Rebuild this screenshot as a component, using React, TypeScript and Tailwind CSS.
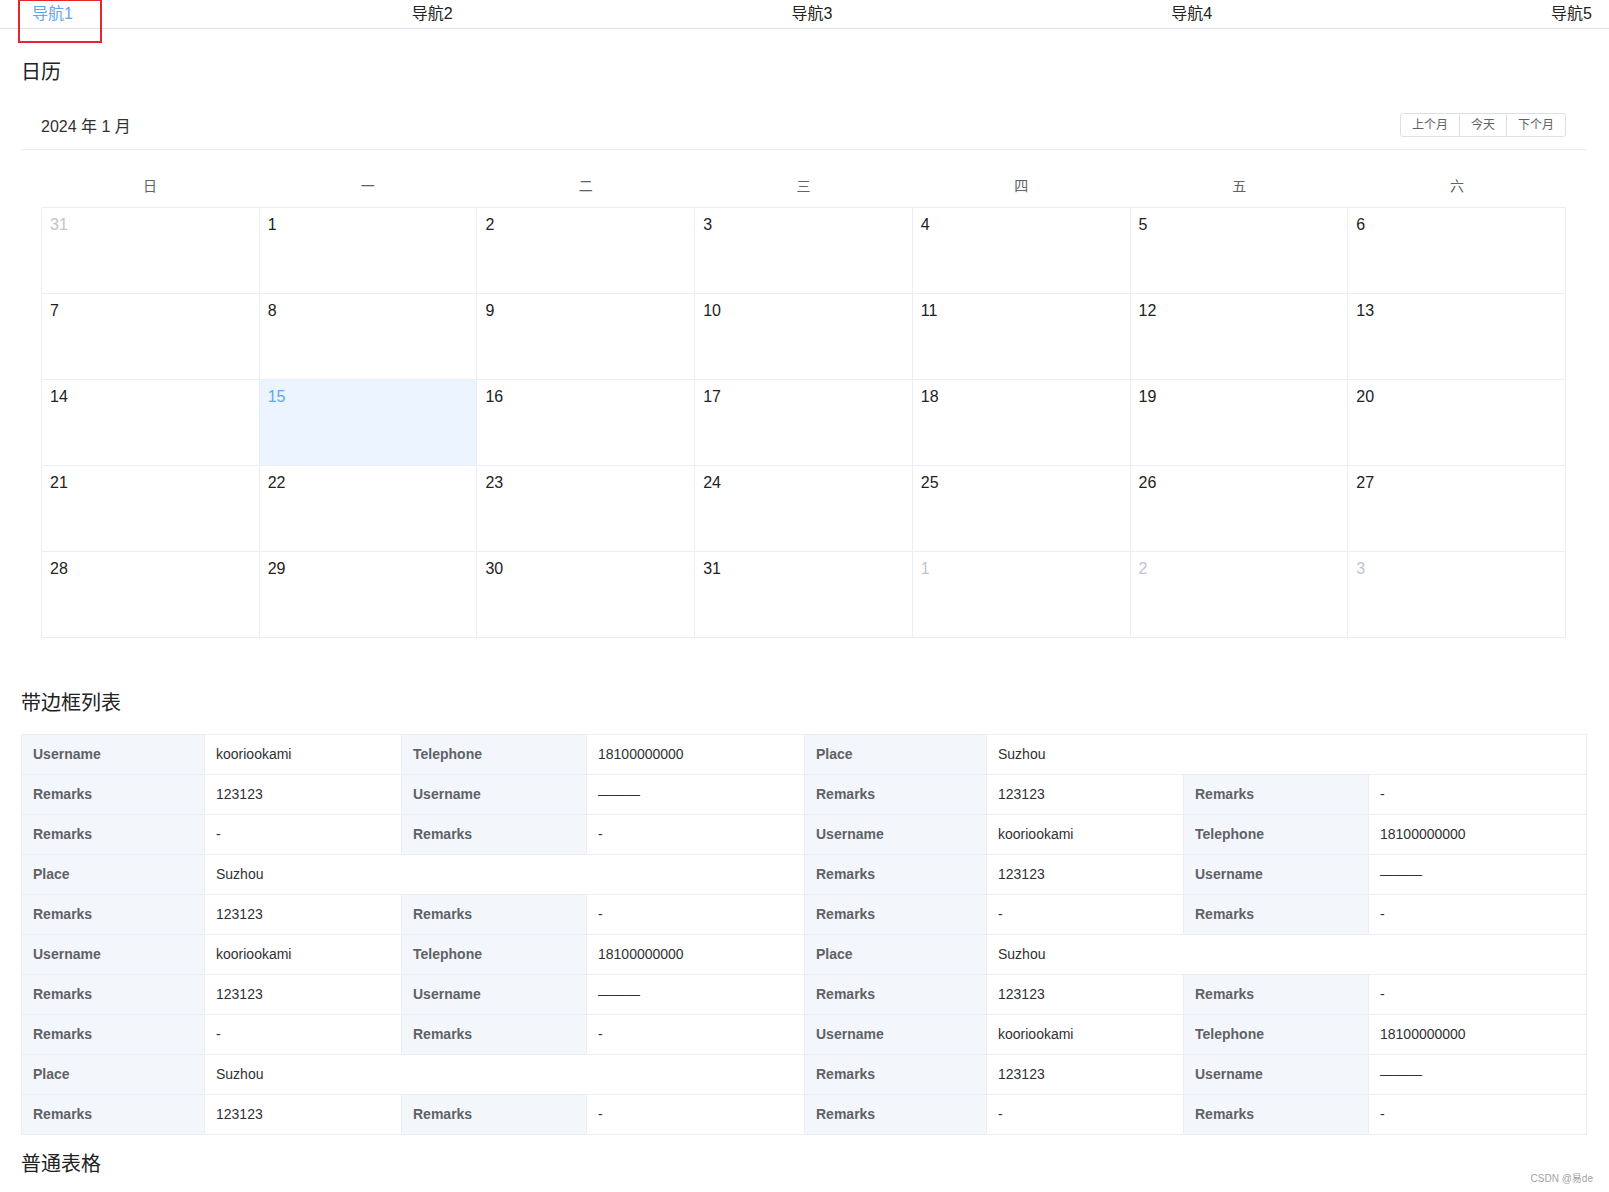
import React from 'react';

const font = { fontFamily: '"Liberation Sans", "Noto Sans CJK SC", sans-serif' };

const navItems = ['导航1', '导航2', '导航3', '导航4', '导航5'];
const weekDays = ['日', '一', '二', '三', '四', '五', '六'];

type Day = { n: number; type: 'prev' | 'cur' | 'next' };

const buildDays = (): Day[] => {
  const days: Day[] = [{ n: 31, type: 'prev' }];
  for (let i = 1; i <= 31; i++) days.push({ n: i, type: 'cur' });
  for (let i = 1; i <= 3; i++) days.push({ n: i, type: 'next' });
  return days;
};

type Cell = { label: string; value: string; span?: number };

const blockA: Cell[][] = [
  [
    { label: 'Username', value: 'kooriookami' },
    { label: 'Telephone', value: '18100000000' },
    { label: 'Place', value: 'Suzhou', span: 3 },
  ],
  [
    { label: 'Remarks', value: '123123' },
    { label: 'Username', value: '———' },
    { label: 'Remarks', value: '123123' },
    { label: 'Remarks', value: '-' },
  ],
  [
    { label: 'Remarks', value: '-' },
    { label: 'Remarks', value: '-' },
    { label: 'Username', value: 'kooriookami' },
    { label: 'Telephone', value: '18100000000' },
  ],
  [
    { label: 'Place', value: 'Suzhou', span: 3 },
    { label: 'Remarks', value: '123123' },
    { label: 'Username', value: '———' },
  ],
  [
    { label: 'Remarks', value: '123123' },
    { label: 'Remarks', value: '-' },
    { label: 'Remarks', value: '-' },
    { label: 'Remarks', value: '-' },
  ],
];

const rows = [...blockA, ...blockA];

const App: React.FC = () => {
  const days = buildDays();

  return (
    <div className="relative min-h-[1192px] bg-white text-[#303133]" style={font}>
      {/* Top nav */}
      <div className="flex h-[29px] items-center justify-between border-b border-[#dcdfe6] pl-[32px] pr-[17px] text-[16px] leading-[28px]">
        {navItems.map((item, i) => (
          <span key={item} className={i === 0 ? 'text-[#5fa6f5]' : 'text-[#222]'}>
            {item}
          </span>
        ))}
      </div>
      {/* annotation box around the active nav item */}
      <div className="pointer-events-none absolute left-[18px] top-[-1px] h-[44px] w-[84px] border-2 border-[#e5262a]" />

      <div className="pl-[21px] pr-[23px]">
        <h2 className="mt-[29px] text-[20px] leading-[28px] text-[#222]">日历</h2>

        {/* Calendar */}
        <div className="mt-[15px]">
          <div className="flex items-center justify-between border-b border-[#ebeef5] px-5 py-3">
            <div className="h-[24px] text-[16px] leading-[28px] text-[#303133]">2024 年 1 月</div>
            <div className="flex h-[24px] rounded-[3px] border border-[#dcdfe6] text-[12px] leading-[22px] text-[#606266]">
              <button className="px-[11px]">上个月</button>
              <button className="border-l border-[#dcdfe6] px-[11px]">今天</button>
              <button className="border-l border-[#dcdfe6] px-[11px]">下个月</button>
            </div>
          </div>
          <div className="px-5 pb-[35px] pt-3">
            <div className="grid grid-cols-7 pb-[10px] pt-[14px] text-center text-[14px] leading-[21px] text-[#606266]">
              {weekDays.map((d) => (
                <div key={d}>{d}</div>
              ))}
            </div>
            <div className="grid grid-cols-7 border-l border-t border-[#ebeef5]">
              {days.map((d, i) => {
                const today = d.type === 'cur' && d.n === 15;
                return (
                  <div
                    key={i}
                    className={`h-[86px] border-b border-r border-[#ebeef5] p-2 text-[16px] leading-[18px] ${
                      today ? 'bg-[#ecf5ff] text-[#5fa6f5]' : d.type === 'cur' ? 'text-[#222]' : 'text-[#c0c4cc]'
                    }`}
                  >
                    {d.n}
                  </div>
                );
              })}
            </div>
          </div>
        </div>

        <h2 className="mt-[16px] text-[20px] leading-[28px] text-[#222]">带边框列表</h2>

        {/* Bordered descriptions */}
        <table className="mt-[17px] w-full table-fixed border-collapse text-[14px] leading-[23px]">
          <colgroup>
            <col className="w-[183px]" />
            <col className="w-[197px]" />
            <col className="w-[185px]" />
            <col className="w-[218px]" />
            <col className="w-[182px]" />
            <col className="w-[197px]" />
            <col className="w-[185px]" />
            <col className="w-[218px]" />
          </colgroup>
          <tbody>
            {rows.map((row, ri) => (
              <tr key={ri}>
                {row.map((c, ci) => (
                  <React.Fragment key={ci}>
                    <td className="border border-[#ebeef5] bg-[#f3f7fc] px-[11px] py-[8px] font-bold text-[#606266]">
                      {c.label}
                    </td>
                    <td colSpan={c.span ?? 1} className="border border-[#ebeef5] px-[11px] py-[8px] text-[#303133]">
                      {c.value}
                    </td>
                  </React.Fragment>
                ))}
              </tr>
            ))}
          </tbody>
        </table>

        <h2 className="mt-[15px] text-[20px] leading-[28px] text-[#222]">普通表格</h2>
      </div>

      <div className="absolute bottom-[6px] right-[16px] text-[10px] text-[#a3a3a3]">CSDN @易de</div>
    </div>
  );
};

export default App;
